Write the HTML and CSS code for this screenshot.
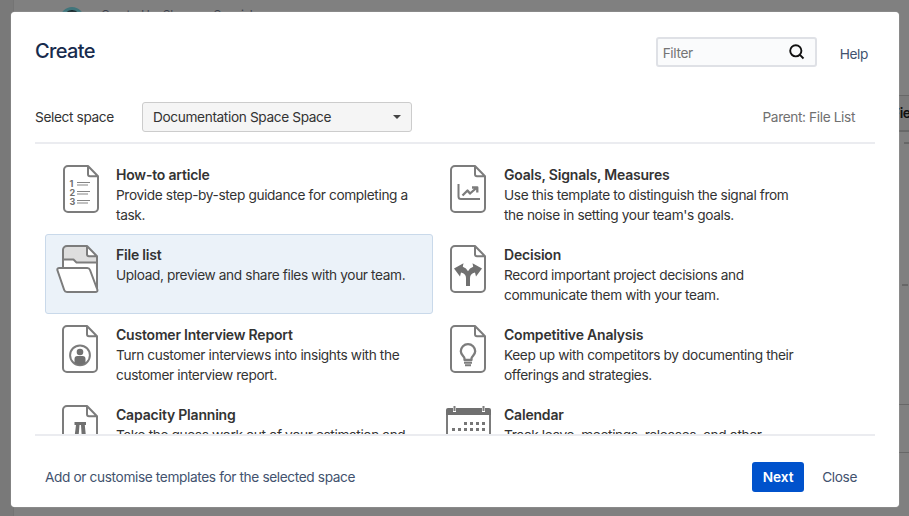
FILE: index.html
```html
<!DOCTYPE html>
<html lang="en">
<head>
    <meta charset="UTF-8">
    <meta name="viewport" content="width=device-width, initial-scale=1.0">
    <title>Create</title>
    <link rel="stylesheet" href="styles.css">
</head>
<body>

    <!-- Page behind the dialog -->
    <div class="page" aria-hidden="true">
        <div class="page-sidebar"></div>
        <div class="page-avatar"></div>
        <div class="page-byline">Created by Shannon Special</div>
        <div class="page-cell">Fie</div>
        <div class="page-rule rule-one"></div>
        <div class="page-rule rule-two"></div>
        <div class="page-rule rule-three"></div>
        <div class="page-rule rule-four"></div>
    </div>

    <svg class="sprite" aria-hidden="true">
        <symbol id="doc" viewBox="0 0 48 48">
            <path d="M31 1L41 11.300V43a4 4 0 0 1-4 4H11a4 4 0 0 1-4-4V5a4 4 0 0 1 4-4zV9.300a2 2 0 0 0 2 2H41" fill="#fff" stroke="#7c7c7c" stroke-width="2" stroke-linejoin="round"/>
        </symbol>
    </svg>

    <div class="dialog" role="dialog">
        <header class="dialog-header">
            <h1>Create</h1>
            <div class="filter">
                <input type="text" placeholder="Filter" aria-label="Filter">
                <svg class="search-icon" viewBox="0 0 16 16"><circle cx="6.800" cy="6.800" r="5.600"/><path d="M10.900 10.900L14.500 14.500"/></svg>
            </div>
            <a href="#" class="help">Help</a>
        </header>

        <div class="space-row">
            <span class="space-label">Select space</span>
            <button type="button" class="space-select">Documentation Space Space</button>
            <span class="parent">Parent: File List</span>
        </div>

        <div class="template-list">
            <div class="template">
                <svg class="icon nudge" viewBox="0 0 48 48">
                    <use href="#doc"/>
                    <g class="numbers"><text x="12.500" y="22">1</text><text x="12.500" y="31">2</text><text x="12.500" y="40">3</text></g>
                    <path class="thin" d="M20 17.500H33M20 20H31M20 26.500H33M20 29H31M20 35.500H33M20 38H31"/>
                </svg>
                <div class="text">
                    <h2>How-to article</h2>
                    <p>Provide step-by-step guidance for completing a<br>task.</p>
                </div>
            </div>
            <div class="template">
                <svg class="icon" viewBox="0 0 48 48">
                    <use href="#doc"/>
                    <path class="line" d="M14.500 19V31.500a2.500 2.500 0 0 0 2.500 2.500H36"/>
                    <path class="line bold" d="M18.500 30.500L23.500 25.500L26 28.500L33 22.500M28 22.500H33.300V27.500"/>
                </svg>
                <div class="text">
                    <h2>Goals, Signals, Measures</h2>
                    <p>Use this template to distinguish the signal from<br>the noise in setting your team's goals.</p>
                </div>
            </div>
            <div class="template selected">
                <svg class="icon" viewBox="0 0 48 48">
                    <path d="M7 24V5a4 4 0 0 1 4-4H31L41 11.300V43a4 4 0 0 1-4 4H9z" fill="#fff"/>
                    <path d="M7 14V5a4 4 0 0 1 4-4H31V11.300H41V17H21L18 14z" fill="#dedede"/>
                    <path d="M31 1L41 11.300H31z" fill="#fff"/>
                    <path class="line" d="M7 23V5a4 4 0 0 1 4-4H31L41 11.300V44M31 1V9.300a2 2 0 0 0 2 2H41M7 14.500H17.500L20.500 17.500H41"/>
                    <path class="line" d="M3.500 23H31a3 3 0 0 1 3 2L41.300 44.500q.7 2.500-2 2.500H11a3 3 0 0 1-2.800-2L1.500 25.500q-.8-2.500 2-2.500z" fill="#fff"/>
                </svg>
                <div class="text">
                    <h2>File list</h2>
                    <p>Upload, preview and share files with your team.</p>
                </div>
            </div>
            <div class="template">
                <svg class="icon" viewBox="0 0 48 48">
                    <use href="#doc"/>
                    <path class="solid" d="M10 23.500L19.500 18.200L18.800 21.700Q22.500 23 24 26.200Q25.500 23 29.200 21.700L28.500 18.200L38 23.500L32 31.500L31 27.500Q26 28.500 26 33V41H22V33Q22 28.500 17 27.500L16 31.500z"/>
                </svg>
                <div class="text">
                    <h2>Decision</h2>
                    <p>Record important project decisions and<br>communicate them with your team.</p>
                </div>
            </div>
            <div class="template">
                <svg class="icon" viewBox="0 0 48 48">
                    <use href="#doc"/>
                    <circle class="line" cx="24" cy="30.300" r="9.900"/>
                    <circle class="solid" cx="24" cy="27" r="3.300"/>
                    <path class="solid" d="M18.500 38V34a3 3 0 0 1 3-3h5a3 3 0 0 1 3 3V38Q24 42 18.500 38z"/>
                </svg>
                <div class="text">
                    <h2>Customer Interview Report</h2>
                    <p>Turn customer interviews into insights with the<br>customer interview report.</p>
                </div>
            </div>
            <div class="template">
                <svg class="icon" viewBox="0 0 48 48">
                    <use href="#doc"/>
                    <path class="line bold" d="M20.500 35V33.500C20.500 31.500 16.800 30 16.800 26.300a7.200 7.200 0 0 1 14.400 0C31.200 30 27.500 31.500 27.500 33.500V35z"/>
                    <path class="line" d="M20 37.800H28M21 40.200H27"/>
                </svg>
                <div class="text">
                    <h2>Competitive Analysis</h2>
                    <p>Keep up with competitors by documenting their<br>offerings and strategies.</p>
                </div>
            </div>
            <div class="template">
                <svg class="icon" viewBox="0 0 48 48">
                    <use href="#doc"/>
                    <path class="solid" d="M18.500 17H30V20H28.800L30 32H25.800L25 20H23.500L22.500 32H18.500L20 20H18.500z"/>
                </svg>
                <div class="text">
                    <h2>Capacity Planning</h2>
                    <p>Take the guess work out of your estimation and</p>
                </div>
            </div>
            <div class="template">
                <svg class="icon" viewBox="0 0 48 48">
                    <path class="line" d="M3 6V47H46V6" fill="#fff"/>
                    <path class="solid" d="M2 10V5a2 2 0 0 1 2-2H45a2 2 0 0 1 2 2V10z"/>
                    <path d="M9 1H12V7H9zM38 1H41V7H38z" fill="#fff"/>
                    <path class="line" d="M10.500 1V6M39.500 1V6"/>
                    <path class="dots" d="M20 18.500H42M8 24.500H42M8 30.500H42"/>
                </svg>
                <div class="text">
                    <h2>Calendar</h2>
                    <p>Track leave, meetings, releases, and other</p>
                </div>
            </div>
        </div>

        <footer class="dialog-footer">
            <a href="#" class="customise">Add or customise templates for the selected space</a>
            <button type="button" class="next">Next</button>
            <a href="#" class="close">Close</a>
        </footer>
    </div>

</body>
</html>
```
FILE: styles.css
```css
* {
    box-sizing: border-box;
}

body {
    margin: 0;
    height: 516px;
    padding: 12px 10px 9px 11px;
    overflow: hidden;
    background-color: #808080;
    color: #333;
    font-family: Inter, "Liberation Sans", sans-serif;
    font-size: 13.7px;
    line-height: 20px;
    letter-spacing: -0.38px;
}

/* Dimmed page under the dialog */
.page {
    position: absolute;
    inset: 0;
    overflow: hidden;
}

.page-sidebar {
    width: 14px;
    height: 100%;
    background-color: #797979;
    border-right: 1px solid #747474;
}

.page-avatar {
    position: absolute;
    left: 60px;
    top: 7px;
    width: 24px;
    height: 24px;
    border-radius: 50%;
    background-color: #17262b;
    border: 3px solid #40757b;
}

.page-byline {
    position: absolute;
    left: 101px;
    top: 5px;
    color: #3b3f4b;
    font-size: 12px;
    letter-spacing: -0.35px;
}

.page-cell {
    position: absolute;
    left: 880px;
    top: 95px;
    width: 40px;
    height: 37px;
    padding: 7px 0 0 11px;
    border: 1px solid #686868;
    border-bottom-width: 2px;
    background-color: #7b7b7b;
    color: #111;
    font-weight: 600;
}

.page-rule {
    position: absolute;
    right: 0;
    height: 1px;
    width: 20px;
    background-color: #676767;
}

.rule-one {
    top: 142px;
    width: 5px;
    height: 2px;
}

.rule-two {
    top: 284px;
    right: 1px;
    width: 6px;
    height: 2px;
}

.rule-three {
    top: 404px;
}

.rule-four {
    top: 452px;
}

.sprite {
    position: absolute;
    width: 0;
    height: 0;
}

.dialog {
    position: relative;
    height: 495px;
    display: flex;
    flex-direction: column;
    padding: 0 24px;
    background-color: #fff;
    border-radius: 4px;
    box-shadow: 0 0 1px rgba(255, 255, 255, 0.8);
}

.dialog-header {
    display: flex;
    align-items: flex-start;
    height: 90px;
    padding-top: 25px;
}

h1 {
    margin: 2px auto 0 0;
    color: #172b4d;
    font-size: 20px;
    font-weight: 500;
    line-height: 24px;
    letter-spacing: -0.65px;
}

.filter {
    display: flex;
    align-items: center;
    width: 161px;
    height: 30px;
    padding: 0 10px 0 5px;
    border: 2px solid #dfe1e6;
    border-radius: 3px;
    background-color: #fafbfc;
}

.filter input {
    flex: 1;
    min-width: 0;
    padding: 2px 0 0;
    border: none;
    outline: none;
    background: none;
    font: inherit;
    letter-spacing: inherit;
}

.filter input::placeholder {
    color: #757575;
}

.search-icon {
    width: 16px;
    height: 16px;
    fill: none;
    stroke: #111;
    stroke-width: 1.9;
}

a {
    color: #42526e;
    text-decoration: none;
}

.help {
    margin: 7px 7px 0 23px;
}

.space-row {
    display: flex;
    align-items: center;
    height: 42px;
    padding-bottom: 10px;
    border-bottom: 2px solid #ebecf0;
    padding-right: 20px;
}

.space-label {
    width: 107px;
}

.space-select {
    display: flex;
    align-items: center;
    justify-content: space-between;
    width: 270px;
    height: 30px;
    flex-shrink: 0;
    padding: 0 10px;
    border: 1px solid #ccc;
    border-radius: 3px;
    background-color: #f5f5f5;
    color: #333;
    font: inherit;
    letter-spacing: inherit;
}

.space-select::after {
    content: "";
    border: 4px solid transparent;
    border-top-color: #444;
    border-bottom: none;
}

.parent {
    margin-left: auto;
    color: #707070;
}

.template-list {
    display: grid;
    grid-template-columns: 388px 388px;
    grid-auto-rows: 80px;
    height: 292px;
    padding: 10px 10px 0;
    overflow: hidden;
    border-bottom: 2px solid #ebecf0;
}

.template {
    display: flex;
    gap: 12px;
    padding: 10px;
    border: 1px solid transparent;
    border-radius: 3px;
}

.template.selected {
    background-color: #ebf2f9;
    border-color: #c9d9ea;
}

.template h2 {
    margin: 0;
    font-size: 14px;
    font-weight: 600;
    line-height: 20px;
    letter-spacing: -0.2px;
}

.template p {
    margin: 0;
    white-space: nowrap;
}

.icon {
    width: 48px;
    height: 48px;
    flex-shrink: 0;
}

.icon.nudge {
    position: relative;
    left: 1px;
}

.line {
    fill: none;
    stroke: #7c7c7c;
    stroke-width: 2;
    stroke-linejoin: round;
}

.line[fill] {
    fill: #fff;
}

.line.bold {
    stroke-width: 2.3;
}

.thin {
    stroke: #858585;
    stroke-width: 1.2;
}

.solid {
    fill: #707070;
}

.dots {
    stroke: #767676;
    stroke-width: 3;
    stroke-dasharray: 3 3;
}

.numbers text {
    fill: #707070;
    font-size: 9px;
    font-weight: 700;
}

.dialog-footer {
    display: flex;
    align-items: center;
    height: 71px;
    padding: 11px 18px 0 10px;
}

.customise {
    margin-right: auto;
}

.next {
    width: 52px;
    height: 30px;
    margin-right: 18px;
    padding: 0;
    border: none;
    border-radius: 3px;
    background-color: #0052cc;
    color: #fff;
    font: inherit;
    font-weight: 600;
}
```
